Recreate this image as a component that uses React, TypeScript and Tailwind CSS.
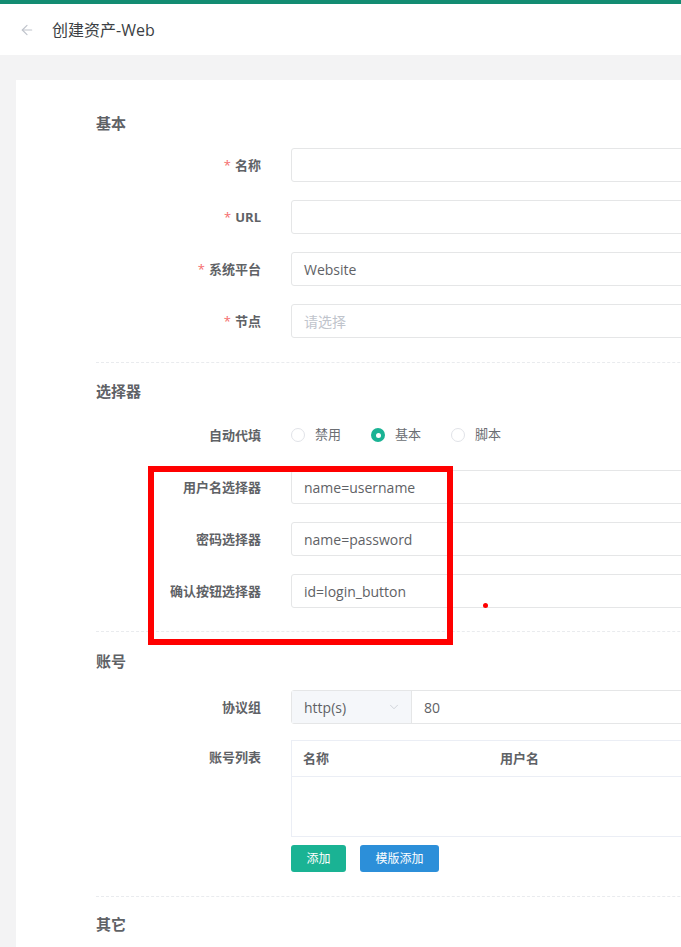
import { ArrowLeft, ChevronDown } from "lucide-react"

const font = { fontFamily: '"Open Sans", "Noto Sans CJK SC", sans-serif' }

function Label({ text, required }: { text: string; required?: boolean }) {
  return (
    <div className="w-[165px] shrink-0 text-right text-[13px] font-bold text-[#5f6266] leading-[34px]">
      {required && <span className="text-[#f56c6c] mr-1 font-normal">*</span>}
      {text}
    </div>
  )
}

function Row({ label, required, children, className = "" }: { label: string; required?: boolean; children: React.ReactNode; className?: string }) {
  return (
    <div className={`flex items-start ${className}`}>
      <Label text={label} required={required} />
      <div className="ml-[30px] flex-1">{children}</div>
    </div>
  )
}

function Input({ value, placeholder }: { value?: string; placeholder?: string }) {
  return (
    <div className="h-[34px] border border-[#e5e6e7] rounded-[3px] px-3 flex items-center text-[14px] bg-white">
      {value ? <span className="text-[#5f6266]">{value}</span> : <span className="text-[#c0c4cc]">{placeholder}</span>}
    </div>
  )
}

function SectionTitle({ text, className = "" }: { text: string; className?: string }) {
  return <div className={`text-[15px] font-bold text-[#5f6266] leading-5 ${className}`}>{text}</div>
}

function Divider({ className = "" }: { className?: string }) {
  return <div className={`border-t border-dashed border-[#e9ebee] ${className}`} />
}

function Radio({ label, checked }: { label: string; checked?: boolean }) {
  return (
    <div className="flex items-center mr-[30px]">
      {checked ? (
        <span className="w-[14px] h-[14px] rounded-full bg-[#1ab394] flex items-center justify-center">
          <span className="w-[5px] h-[5px] rounded-full bg-white" />
        </span>
      ) : (
        <span className="w-[14px] h-[14px] rounded-full border border-[#e1e3e8] bg-white" />
      )}
      <span className="ml-[10px] text-[13px] text-[#6b6e73]">{label}</span>
    </div>
  )
}

export default function App() {
  return (
    <div className="relative w-full min-h-[947px] bg-[#f3f3f4] overflow-hidden" style={font}>
      <div className="h-1 bg-[#138c72]" />
      <div className="h-[51px] bg-white flex items-center pl-[19px]">
        <ArrowLeft className="w-4 h-4 text-[#c0c4cc]" strokeWidth={1.8} />
        <span className="ml-[17px] text-[16px] text-[#3c3f44]">创建资产-Web</span>
      </div>

      <div className="ml-4 mt-[25px] w-[1000px] bg-white pl-20 pt-[33px] pb-10">
        <SectionTitle text="基本" />
        <div className="mt-[15px] flex flex-col gap-[18px]">
          <Row label="名称" required><Input /></Row>
          <Row label="URL" required><Input /></Row>
          <Row label="系统平台" required><Input value="Website" /></Row>
          <Row label="节点" required><Input placeholder="请选择" /></Row>
        </div>
        <Divider className="mt-6" />

        <SectionTitle text="选择器" className="mt-[18px]" />
        <div className="mt-[17px] flex flex-col gap-[18px]">
          <Row label="自动代填">
            <div className="h-[34px] flex items-center">
              <Radio label="禁用" />
              <Radio label="基本" checked />
              <Radio label="脚本" />
            </div>
          </Row>
          <Row label="用户名选择器"><Input value="name=username" /></Row>
          <Row label="密码选择器"><Input value="name=password" /></Row>
          <Row label="确认按钮选择器"><Input value="id=login_button" /></Row>
        </div>
        <Divider className="mt-[23px]" />

        <SectionTitle text="账号" className="mt-[19px]" />
        <div className="mt-[19px]">
          <Row label="协议组">
            <div className="h-[34px] flex border border-[#e5e6e7] rounded-[3px] text-[14px] text-[#5f6266]">
              <div className="w-[120px] bg-[#f5f7fa] border-r border-[#e5e6e7] flex items-center justify-between pl-3 pr-[10px]">
                <span>http(s)</span>
                <ChevronDown className="w-[14px] h-[14px] text-[#c0c4cc]" strokeWidth={1.2} />
              </div>
              <div className="flex items-center px-3">80</div>
            </div>
          </Row>
        </div>
        <Row label="账号列表" className="mt-4">
          <div className="border border-[#ebeef5] h-[97px]">
            <div className="h-9 flex items-center border-b border-[#ebeef5] text-[13px] font-bold text-[#5f6266]">
              <div className="w-[208px] pl-[11px]">名称</div>
              <div>用户名</div>
            </div>
          </div>
          <div className="mt-2 flex gap-[14px]">
            <button className="h-[27px] w-[55px] rounded-[3px] bg-[#1ab394] text-white text-[12px]">添加</button>
            <button className="h-[27px] w-[79px] rounded-[3px] bg-[#2c8fd9] text-white text-[12px]">模版添加</button>
          </div>
        </Row>
        <Divider className="mt-6" />
        <SectionTitle text="其它" className="mt-[17px]" />
      </div>

      <div className="absolute left-[148px] top-[466px] w-[305px] h-[179px] border-[6px] border-[#ff0000]" />
      <div className="absolute left-[483px] top-[603px] w-[5px] h-[5px] rounded-full bg-[#ff0000]" />
    </div>
  )
}
